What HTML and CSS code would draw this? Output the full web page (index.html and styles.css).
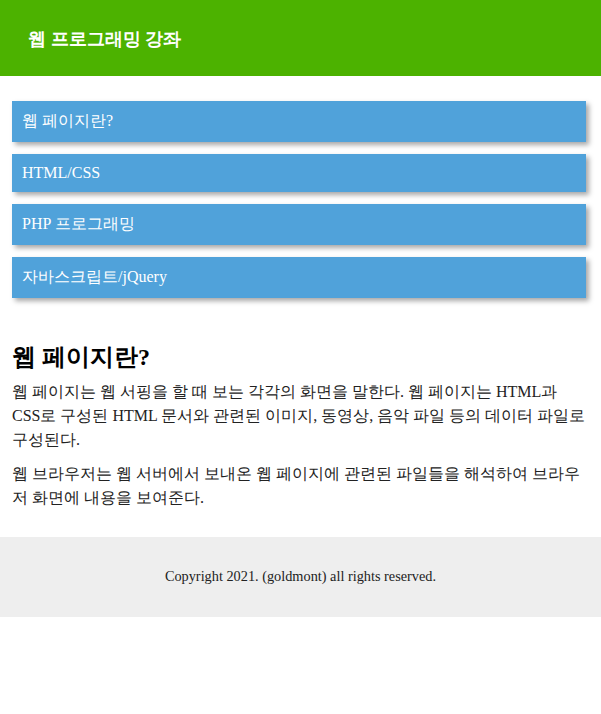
FILE: index.html
```html
<!DOCTYPE html>
<html lang="ko">
<head>
<meta charset="utf-8">
<title>웹 프로그래밍 강좌</title>
<link rel="stylesheet" href="styles.css">
</head>
<body>
<header class="site-header">
  <h1 class="site-title">웹 프로그래밍 강좌</h1>
</header>
<nav class="menu">
  <a class="menu-item" href="#">웹 페이지란?</a>
  <a class="menu-item" href="#">HTML/CSS</a>
  <a class="menu-item" href="#">PHP 프로그래밍</a>
  <a class="menu-item" href="#">자바스크립트/jQuery</a>
</nav>
<main class="content">
  <h2 class="content-title">웹 페이지란?</h2>
  <p class="content-text">웹 페이지는 웹 서핑을 할 때 보는 각각의 화면을 말한다. 웹 페이지는 HTML과 CSS로 구성된 HTML 문서와 관련된 이미지, 동영상, 음악 파일 등의 데이터 파일로 구성된다.</p>
  <p class="content-text">웹 브라우저는 웹 서버에서 보내온 웹 페이지에 관련된 파일들을 해석하여 브라우저 화면에 내용을 보여준다.</p>
</main>
<footer class="site-footer">
  <p class="copyright">Copyright 2021. (goldmont) all rights reserved.</p>
</footer>
</body>
</html>
```
FILE: styles.css
```css
html, body {
  margin: 0;
  padding: 0;
  background: #ffffff;
}

body {
  font-family: "Liberation Serif", serif;
  font-size: 16px;
  color: #222222;
}

.site-header {
  height: 76px;
  background: #4cb200;
  display: flex;
  align-items: center;
  padding: 0 28px;
}

.site-title {
  margin: 0;
  font-size: 18.2px;
  font-weight: 700;
  color: #ffffff;
}

.menu {
  display: flex;
  flex-direction: column;
  gap: 12px;
  padding: 25px 15px 0 12px;
}

.menu-item {
  display: block;
  padding: 10px;
  background: #50a2da;
  color: #ffffff;
  text-decoration: none;
  box-shadow: 3px 3px 5px rgba(0, 0, 0, 0.35);
}

.content {
  padding: 0 12px 27px;
}

.content-title {
  margin: 43px 0 7px;
  font-size: 24px;
  font-weight: 700;
  line-height: 32px;
  color: #000000;
}

.content-text {
  margin: 0 0 10px;
  line-height: 24px;
}

.content-text:last-child {
  margin-bottom: 0;
}

.site-footer {
  height: 80px;
  background: #eeeeee;
  display: flex;
  align-items: center;
  justify-content: center;
}

.copyright {
  margin: 0 0 2px;
  font-size: 14.3px;
  color: #222222;
}
```
